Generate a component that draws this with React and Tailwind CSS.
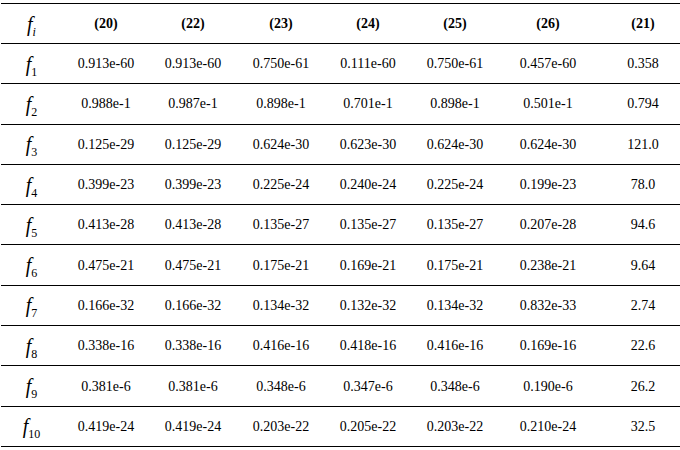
const widths = ["w-[61px]", "w-[88px]", "w-[86px]", "w-[90px]", "w-[84px]", "w-[90px]", "w-[96px]", "w-[84px] pl-[10px]"];

const headers = ["(20)", "(22)", "(23)", "(24)", "(25)", "(26)", "(21)"];

const rows = [
  ["1", "0.913e-60", "0.913e-60", "0.750e-61", "0.111e-60", "0.750e-61", "0.457e-60", "0.358"],
  ["2", "0.988e-1", "0.987e-1", "0.898e-1", "0.701e-1", "0.898e-1", "0.501e-1", "0.794"],
  ["3", "0.125e-29", "0.125e-29", "0.624e-30", "0.623e-30", "0.624e-30", "0.624e-30", "121.0"],
  ["4", "0.399e-23", "0.399e-23", "0.225e-24", "0.240e-24", "0.225e-24", "0.199e-23", "78.0"],
  ["5", "0.413e-28", "0.413e-28", "0.135e-27", "0.135e-27", "0.135e-27", "0.207e-28", "94.6"],
  ["6", "0.475e-21", "0.475e-21", "0.175e-21", "0.169e-21", "0.175e-21", "0.238e-21", "9.64"],
  ["7", "0.166e-32", "0.166e-32", "0.134e-32", "0.132e-32", "0.134e-32", "0.832e-33", "2.74"],
  ["8", "0.338e-16", "0.338e-16", "0.416e-16", "0.418e-16", "0.416e-16", "0.169e-16", "22.6"],
  ["9", "0.381e-6", "0.381e-6", "0.348e-6", "0.347e-6", "0.348e-6", "0.190e-6", "26.2"],
  ["10", "0.419e-24", "0.419e-24", "0.203e-22", "0.205e-22", "0.203e-22", "0.210e-24", "32.5"],
];

function Fn({ sub, italicSub }) {
  return (
    <span className="whitespace-nowrap">
      <span className="italic text-[20px]">f</span>
      <span className={`text-[12px] relative top-[5px] ${italicSub ? "italic" : ""}`}>{sub}</span>
    </span>
  );
}

export default function App() {
  return (
    <div className="w-[680px] h-[450px] bg-white text-black font-['Liberation_Serif',serif] pt-[3px] pl-[1px]">
      <div className="flex items-center h-[41px] border-y border-black">
        <div className={`${widths[0]} text-center`}>
          <Fn sub="i" italicSub />
        </div>
        {headers.map((h, i) => (
          <div key={h} className={`${widths[i + 1]} text-center text-[14px] font-bold`}>
            {h}
          </div>
        ))}
      </div>
      {rows.map((r) => (
        <div key={r[0]} className="flex items-center h-[40.3px] border-b border-black">
          <div className={`${widths[0]} text-center`}>
            <Fn sub={r[0]} />
          </div>
          {r.slice(1).map((v, i) => (
            <div key={i} className={`${widths[i + 1]} text-center text-[14px]`}>
              {v}
            </div>
          ))}
        </div>
      ))}
    </div>
  );
}
